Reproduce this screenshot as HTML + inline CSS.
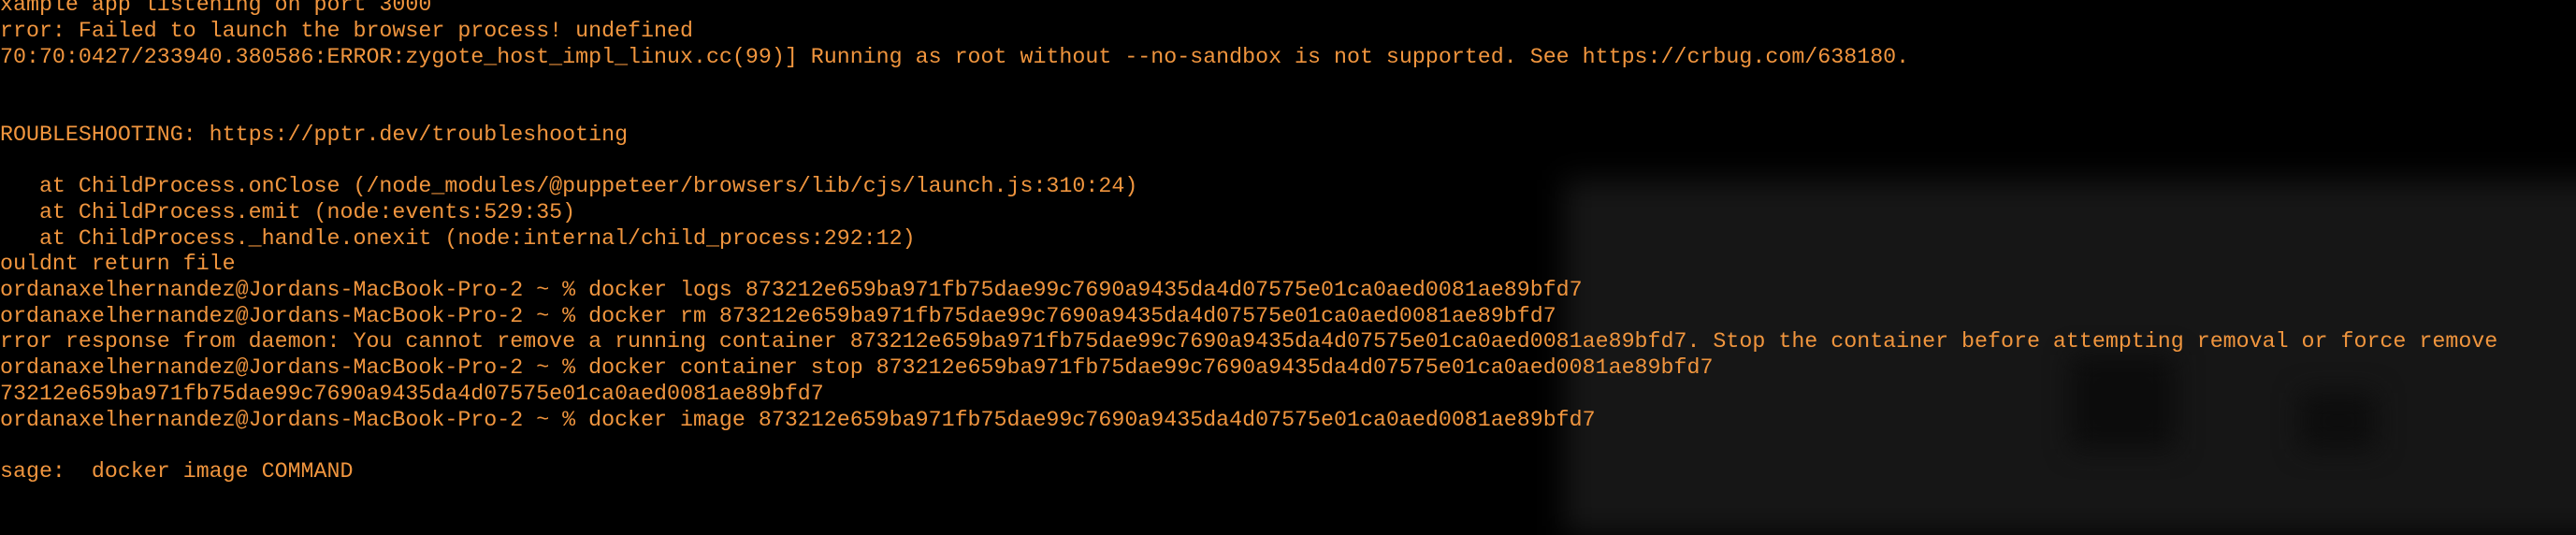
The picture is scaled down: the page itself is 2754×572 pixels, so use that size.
<!DOCTYPE html>
<html><head><meta charset="utf-8"><style>
html,body{margin:0;padding:0;width:2754px;height:528px;overflow:hidden;background:#000;}
.ov{position:absolute;left:1672px;top:192px;width:1120px;height:380px;background:#161616;filter:blur(16px);}
.ov2{position:absolute;left:2215px;top:380px;width:110px;height:100px;background:#0c0c0c;filter:blur(14px);}
.ov3{position:absolute;left:2460px;top:420px;width:80px;height:60px;background:#0d0d0d;filter:blur(14px);}
pre{position:absolute;left:0;top:-7.7px;margin:0;font-family:"Liberation Mono",monospace;font-size:23.3px;line-height:27.7px;color:#f0953e;white-space:pre;}
</style></head><body>
<div class="ov"></div><div class="ov2"></div><div class="ov3"></div>
<pre>xample app listening on port 3000
rror: Failed to launch the browser process! undefined
70:70:0427/233940.380586:ERROR:zygote_host_impl_linux.cc(99)] Running as root without --no-sandbox is not supported. See https://crbug.com/638180.


ROUBLESHOOTING: https://pptr.dev/troubleshooting

   at ChildProcess.onClose (/node_modules/@puppeteer/browsers/lib/cjs/launch.js:310:24)
   at ChildProcess.emit (node:events:529:35)
   at ChildProcess._handle.onexit (node:internal/child_process:292:12)
ouldnt return file
ordanaxelhernandez@Jordans-MacBook-Pro-2 ~ % docker logs 873212e659ba971fb75dae99c7690a9435da4d07575e01ca0aed0081ae89bfd7
ordanaxelhernandez@Jordans-MacBook-Pro-2 ~ % docker rm 873212e659ba971fb75dae99c7690a9435da4d07575e01ca0aed0081ae89bfd7
rror response from daemon: You cannot remove a running container 873212e659ba971fb75dae99c7690a9435da4d07575e01ca0aed0081ae89bfd7. Stop the container before attempting removal or force remove
ordanaxelhernandez@Jordans-MacBook-Pro-2 ~ % docker container stop 873212e659ba971fb75dae99c7690a9435da4d07575e01ca0aed0081ae89bfd7
73212e659ba971fb75dae99c7690a9435da4d07575e01ca0aed0081ae89bfd7
ordanaxelhernandez@Jordans-MacBook-Pro-2 ~ % docker image 873212e659ba971fb75dae99c7690a9435da4d07575e01ca0aed0081ae89bfd7

sage:  docker image COMMAND</pre>
</body></html>
